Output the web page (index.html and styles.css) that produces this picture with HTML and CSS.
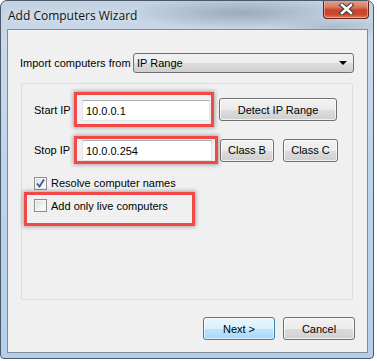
FILE: index.html
```html
<!DOCTYPE html>
<html lang="en">
<head>
    <meta charset="UTF-8">
    <title>Add Computers Wizard</title>
    <link rel="stylesheet" href="styles.css">
</head>
<body>
    <div class="window">
        <div class="titlebar">
            <span class="title">Add Computers Wizard</span>
            <div class="close">
                <svg width="19" height="12" viewBox="0 0 19 12">
                    <path d="M5 2 L14 10 M14 2 L5 10" stroke="#3b3b3b" stroke-width="4.6" stroke-linecap="square"/>
                    <path d="M5 2 L14 10 M14 2 L5 10" stroke="#fff" stroke-width="2.6" stroke-linecap="square"/>
                </svg>
            </div>
        </div>
        <div class="client">
            <div class="import-row">
                <span class="import-label">Import computers from</span>
                <div class="combo">
                    <span>IP Range</span>
                    <span class="arrow"></span>
                </div>
            </div>

            <div class="group">
                <div class="ip-row">
                    <span class="ip-label">Start IP</span>
                    <div class="mark mark-start">
                        <div class="textbox">10.0.0.1</div>
                    </div>
                    <button class="btn btn-detect">Detect IP Range</button>
                </div>
                <div class="ip-row stop-row">
                    <span class="ip-label">Stop IP</span>
                    <div class="mark mark-stop">
                        <div class="textbox">10.0.0.254</div>
                    </div>
                    <button class="btn btn-classb">Class B</button>
                    <button class="btn btn-classc">Class C</button>
                </div>
                <label class="check-row">
                    <span class="checkbox">
                        <svg width="11" height="11" viewBox="0 0 11 11">
                            <path d="M2 5.5 L4.5 8.5 L9 1.5" fill="none" stroke="#3b57a0" stroke-width="1.8"/>
                        </svg>
                    </span>
                    Resolve computer names
                </label>
                <div class="mark mark-live">
                    <label class="check-row">
                        <span class="checkbox"></span>
                        Add only live computers
                    </label>
                </div>
            </div>

            <div class="footer">
                <button class="btn btn-next">Next &gt;</button>
                <button class="btn btn-cancel">Cancel</button>
            </div>
        </div>
    </div>
</body>
</html>
```

FILE: styles.css
```css
body {
    margin: 0;
    background: #ffffff;
    font-family: "Liberation Sans", Arial, sans-serif;
    font-size: 11px;
    color: #000;
}
.window {
    width: 374px;
    height: 359px;
    box-sizing: border-box;
    border: 1px solid #4a5968;
    border-radius: 7px 7px 4px 4px;
    background:
        radial-gradient(ellipse 110px 16px at 240px 12px, rgba(120, 136, 154, 0.55), rgba(120, 136, 154, 0) 100%),
        radial-gradient(ellipse 60px 10px at 330px 26px, rgba(130, 146, 162, 0.4), rgba(130, 146, 162, 0) 100%),
        linear-gradient(to bottom, #c3d2e2 0px, #c9d9ea 40px, #bcd3ec 200px, #b5cfea 100%);
    display: flex;
    flex-direction: column;
    overflow: hidden;
}
.titlebar {
    height: 28px;
    display: flex;
    align-items: flex-start;
}
.title {
    font-family: "Open Sans", "Noto Sans", sans-serif;
    font-size: 12px;
    margin: 6px 0 0 7px;
    color: #111;
    text-shadow: 0 0 6px rgba(255, 255, 255, 0.9);
}
.close {
    margin-left: auto;
    margin-right: 4px;
    margin-top: -1px;
    width: 46px;
    height: 19px;
    box-sizing: border-box;
    border: 1px solid #6b2316;
    border-top: none;
    border-radius: 0 0 4px 4px;
    background: linear-gradient(to bottom, #e6a696 0%, #d7785f 40%, #c8452a 55%, #c9482c 80%, #d98264 100%);
    box-shadow: inset 0 0 0 1px rgba(255, 220, 210, 0.45);
    display: flex;
    align-items: center;
    justify-content: center;
}
.client {
    margin: 0 5px 0 6px;
    height: 324px;
    box-sizing: border-box;
    border: 1px solid #7d8d9c;
    background: #f0f0f0;
    padding: 23px 13px 0 12px;
    display: flex;
    flex-direction: column;
}
.import-row {
    display: flex;
    align-items: center;
    height: 20px;
}
.import-label {
    width: 113px;
}
.combo {
    flex: 1;
    height: 20px;
    box-sizing: border-box;
    border: 1px solid #707070;
    border-radius: 3px;
    background: linear-gradient(to bottom, #f2f2f2 0%, #ebebeb 50%, #dddddd 50%, #cfcfcf 100%);
    display: flex;
    align-items: center;
    padding: 0 6px 0 3px;
}
.arrow {
    margin-left: auto;
    width: 0;
    height: 0;
    border-left: 4px solid transparent;
    border-right: 4px solid transparent;
    border-top: 4px solid #000;
}
.group {
    margin: 10px 1px 0 1px;
    height: 217px;
    box-sizing: border-box;
    border: 1px solid #d5dfe5;
    border-radius: 2px;
    padding: 8px 12px 0 12px;
    display: flex;
    flex-direction: column;
}
.ip-row {
    display: flex;
    align-items: center;
}
.ip-label {
    width: 40px;
}
.mark {
    border: 3px solid #f24848;
    box-shadow: 0 0 4px 1px rgba(0, 0, 0, 0.3);
}
.mark-start {
    padding: 5px 1px 3px 5px;
    width: 128px;
    height: 21px;
}
.mark-stop {
    padding: 1px 3px 0 5px;
    width: 130px;
    height: 21px;
}
.textbox {
    height: 21px;
    box-sizing: border-box;
    background: #fff;
    border: 1px solid #e2e3ea;
    border-top-color: #abadb3;
    padding: 0 3px;
    display: flex;
    align-items: center;
}
.stop-row {
    margin-top: 9px;
}
.btn {
    font-family: "Liberation Sans", Arial, sans-serif;
    font-size: 11px;
    color: #000;
    height: 23px;
    box-sizing: border-box;
    border: 1px solid #707070;
    border-radius: 3px;
    background: linear-gradient(to bottom, #f2f2f2 0%, #ebebeb 50%, #dddddd 50%, #cfcfcf 100%);
    box-shadow: inset 0 0 0 1px rgba(255, 255, 255, 0.7);
    padding: 0;
}
.btn-detect {
    margin-left: 5px;
    width: 118px;
}
.btn-classb {
    margin-left: 2px;
    width: 54px;
}
.btn-classc {
    margin-left: 9px;
    width: 55px;
}
.check-row {
    display: flex;
    align-items: center;
    gap: 4px;
    height: 14px;
}
.group > .check-row {
    margin-top: 12px;
}
.checkbox {
    width: 13px;
    height: 13px;
    box-sizing: border-box;
    border: 1px solid #8e8f8f;
    background: linear-gradient(135deg, #dcdcdc 0%, #f2f2f2 60%, #ffffff 100%);
    box-shadow: inset 0 0 0 1px #f4f4f4;
    display: flex;
    align-items: center;
    justify-content: center;
}
.mark-live {
    margin: 2px 0 0 -10px;
    width: 158px;
    height: 24px;
    padding: 4px 0 0 7px;
}
.mark-live .check-row {
    height: 13px;
}
.footer {
    display: flex;
    justify-content: flex-end;
    gap: 8px;
    margin: 17px 0 0 0;
}
.btn-next,
.btn-cancel {
    width: 72px;
    height: 23px;
}
.btn-next {
    border-color: #3c7fb1;
    background: linear-gradient(to bottom, #eaf6fd 0%, #d9f0fc 50%, #bee6fd 50%, #a7d9f5 100%);
    box-shadow: inset 0 0 0 1px rgba(255, 255, 255, 0.6);
}
.btn-cancel {
    margin-right: -1px;
}
```
